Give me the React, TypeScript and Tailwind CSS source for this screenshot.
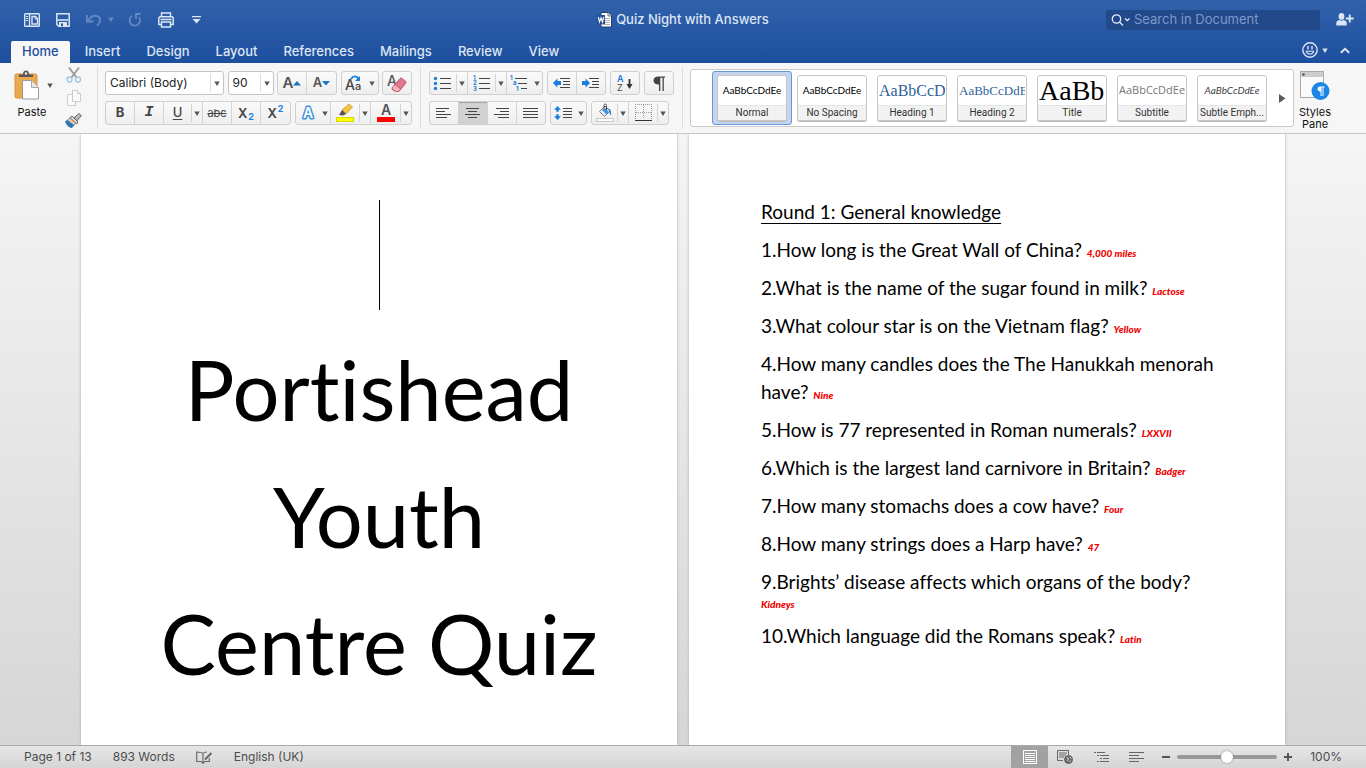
import { useState } from 'react'
import type { ReactNode } from 'react'

const TABS = ['Home', 'Insert', 'Design', 'Layout', 'References', 'Mailings', 'Review', 'View']

const STYLES = [
    { name: 'Normal', sample: 'AaBbCcDdEe', className: "justify-center font-['Lato'] text-[10px] text-black" },
    { name: 'No Spacing', sample: 'AaBbCcDdEe', className: "justify-center font-['Lato'] text-[10px] text-black" },
    { name: 'Heading 1', sample: 'AaBbCcD', className: "font-['Liberation_Serif'] text-base text-[#2f5f9e]" },
    { name: 'Heading 2', sample: 'AaBbCcDdE', className: "font-['Liberation_Serif'] text-[13px] text-[#2f5f9e]" },
    { name: 'Title', sample: 'AaBb(', className: "font-['Liberation_Serif'] text-[28px] text-black" },
    { name: 'Subtitle', sample: 'AaBbCcDdEe', className: "font-['Open_Sans'] text-[11px] text-[#777]" },
    { name: 'Subtle Emph...', sample: 'AaBbCcDdEe', className: "justify-center font-['Lato'] text-[10px] italic text-[#444]" },
]

const QUESTIONS = [
    { q: '1.How long is the Great Wall of China?', a: '4,000 miles' },
    { q: '2.What is the name of the sugar found in milk?', a: 'Lactose' },
    { q: '3.What colour star is on the Vietnam flag?', a: 'Yellow' },
    { q: '4.How many candles does the The Hanukkah menorah have?', a: 'Nine' },
    { q: '5.How is 77 represented in Roman numerals?', a: 'LXXVII' },
    { q: '6.Which is the largest land carnivore in Britain?', a: 'Badger' },
    { q: '7.How many stomachs does a cow have?', a: 'Four' },
    { q: '8.How many strings does a Harp have?', a: '47' },
    { q: '9.Brights’ disease affects which organs of the body?', a: 'Kidneys', below: true },
    { q: '10.Which language did the Romans speak?', a: 'Latin' },
]

function Caret({ className = 'text-[#555]' }: { className?: string }) {
    return (
        <svg width="6" height="5" viewBox="0 0 6 5" className={`shrink-0 ${className}`} fill="currentColor">
            <path d="M0.3 0.5h5.4L3 5z" />
        </svg>
    )
}

function Group({ children }: { children: ReactNode }) {
    return (
        <div className="flex h-6 divide-x divide-[#d4d4d4] rounded-[3px] border border-[#cfcfcf] bg-linear-to-b from-[#fafafa] to-[#eeeeee]">
            {children}
        </div>
    )
}

function Tool({ label, width = 'w-[29px]', menu, split, active, children }: {
    label: string
    width?: string
    menu?: boolean
    split?: boolean
    active?: boolean
    children: ReactNode
}) {
    return (
        <button
            type="button"
            aria-label={label}
            title={label}
            className={`flex items-center ${width} ${active ? 'bg-[#d2d2d2] shadow-[inset_0_1px_1px_#a5a5a5]' : ''}`}
        >
            <span className="flex flex-1 items-center justify-center">{children}</span>
            {menu && (
                <span className={`flex h-[18px] w-[11px] items-center justify-center ${split ? 'border-l border-[#d4d4d4]' : ''}`}>
                    <Caret />
                </span>
            )}
        </button>
    )
}

function Lines({ rows, color = '#454545' }: { rows: number[][]; color?: string }) {
    return (
        <svg width="18" height="12" viewBox="0 0 18 12" shapeRendering="crispEdges" fill={color}>
            {rows.map(([x, w], i) => (
                <rect key={i} x={x} y={1 + i * 3} width={w} height="1" />
            ))}
        </svg>
    )
}

function Indent({ right }: { right?: boolean }) {
    return (
        <svg width="18" height="14" viewBox="0 0 18 14">
            <path d={right ? 'M8 7L3.6 2.5V5H0v4h3.6v2.5z' : 'M0 7l4.4-4.5V5H8v4H4.4v2.5z'} fill="#1a7fdc" />
            <g fill="#454545" shapeRendering="crispEdges">
                <rect x="7" y="2" width="10" height="1" />
                <rect x="10" y="5" width="7" height="1" />
                <rect x="10" y="8" width="7" height="1" />
                <rect x="7" y="11" width="10" height="1" />
            </g>
        </svg>
    )
}

function ListIcon({ marks }: { marks: 'dots' | 'numbers' | 'levels' }) {
    const indents = marks === 'levels' ? [5, 8, 11] : [6, 6, 6]
    return (
        <svg width="18" height="16" viewBox="0 0 18 16" className="overflow-visible">
            {indents.map((x, i) => (
                <rect key={i} x={x} y={3 + i * 5} width={marks === 'levels' ? 17 - x : 11} height="1" fill="#454545" shapeRendering="crispEdges" />
            ))}
            {marks === 'dots' && [3.5, 8.5, 13.5].map((y) => <circle key={y} cx="1.5" cy={y} r="1.7" fill="#1a7fdc" />)}
            {marks !== 'dots' && (
                <g fill="#1a7fdc" fontFamily="Inter, sans-serif" fontSize="6" fontWeight="700">
                    <text x="0" y="5">1</text>
                    <text x={marks === 'levels' ? 3 : 0} y="10">{marks === 'levels' ? 'a' : '2'}</text>
                    <text x={marks === 'levels' ? 6 : 0} y="16">{marks === 'levels' ? '1' : '3'}</text>
                </g>
            )}
        </svg>
    )
}

function TitleBar() {
    return (
        <div className="grid h-[39px] grid-cols-[1fr_auto_1fr] items-center text-[#dbe5f4]">
            <div className="flex items-center pl-6">
                <button type="button" aria-label="Show sidebar">
                    <svg width="16" height="16" viewBox="0 0 16 16" fill="none" stroke="currentColor" strokeWidth="1.4">
                        <rect x="0.7" y="1.7" width="14.6" height="12.6" rx="0.8" />
                        <path d="M5.5 2v12" />
                        <path d="M8 4.500h3.500l2 2v5.500H8z" />
                        <path d="M2 4.500h2M2 6.500h2M2 8.500h2" strokeWidth="1" />
                        <path d="M11 4.500V7h2.500" strokeWidth="1" />
                    </svg>
                </button>
                <button type="button" aria-label="Save" className="ml-4">
                    <svg width="14" height="14" viewBox="0 0 14 14" fill="none" stroke="currentColor" strokeWidth="1.5">
                        <path d="M0.8 0.8h12.4v12.4H2.6L0.8 11.4z" />
                        <path d="M1.500 7h11" strokeWidth="1.6" />
                        <path d="M3 9h8v5H3z" fill="currentColor" stroke="none" />
                        <path d="M5 10.500h2v2.700H5z" fill="#275aa5" stroke="none" />
                    </svg>
                </button>
                <button type="button" aria-label="Undo" className="ml-4 flex items-center gap-[6px] text-[#6489c2]">
                    <svg width="16" height="14" viewBox="0 0 16 14" fill="none" stroke="currentColor" strokeWidth="1.8">
                        <path d="M1 2v6.5h6.300" />
                        <path d="M1.500 8C4 4.500 8 1.800 11.500 3.300C15.500 5 15 9 11 12.800" />
                    </svg>
                    <Caret className="text-[#6489c2]" />
                </button>
                <button type="button" aria-label="Repeat" className="ml-[14px] text-[#6489c2]">
                    <svg width="14" height="14" viewBox="0 0 14 14" fill="none" stroke="currentColor" strokeWidth="1.8">
                        <path d="M4 2.800A5.300 5.300 0 1 0 11.200 4.200" />
                        <path d="M8 6V1h4.500" />
                    </svg>
                </button>
                <button type="button" aria-label="Print" className="ml-4">
                    <svg width="16" height="16" viewBox="0 0 16 16" fill="none" stroke="currentColor" strokeWidth="1.5">
                        <path d="M3.500 4V1h9v3M3.500 12.500H0.800V5.800L2 4.700h12l1.200 1.100v6.700h-2.700" />
                        <path d="M3.500 10h9v5h-9zM2.500 7.500h11" />
                    </svg>
                </button>
                <button type="button" aria-label="Customise toolbar" className="ml-[18px]">
                    <svg width="9" height="8" viewBox="0 0 9 8" fill="currentColor">
                        <path d="M0 0h9v1.300H0zM0.500 3h8L4.500 7.500z" />
                    </svg>
                </button>
            </div>
            <h1 className="flex items-center gap-1 text-[13px] font-medium">
                <svg width="15" height="16" viewBox="0 0 15 16">
                    <path d="M4 0.500h7l3.500 3.500v11H4z" fill="#fff" stroke="#23406f" />
                    <path d="M11 0.500V4h3.500" fill="#ddd" stroke="#555" strokeWidth="0.800" />
                    <path d="M8 6.500h5M8 8.500h5M5 10.500h8M5 12.500h8" stroke="#999" strokeWidth="0.800" />
                    <rect x="0" y="3" width="8" height="9" fill="#244f91" />
                    <path d="M1.300 5l1.200 5L4 6l1.500 4 1.200-5" fill="none" stroke="#fff" strokeWidth="1.200" />
                </svg>
                Quiz Night with Answers
            </h1>
            <div className="flex items-center justify-end gap-4 pr-3">
                <label className="flex h-5 w-[214px] items-center gap-1 rounded-[3px] bg-[#22498a] px-[5px]">
                    <svg width="19" height="12" viewBox="0 0 19 12" fill="none" stroke="#e6edf8" strokeWidth="1.300">
                        <circle cx="5.500" cy="5" r="4.200" />
                        <path d="M8.500 8l3.500 3.500M14 4.500l2.200 2.200 2.200-2.200" />
                    </svg>
                    <input
                        type="search"
                        aria-label="Search in Document"
                        placeholder="Search in Document"
                        className="min-w-0 flex-1 bg-transparent text-[13px] outline-none placeholder:text-[#7d9ac8]"
                    />
                </label>
                <button type="button" aria-label="Share">
                    <svg width="18" height="13" viewBox="0 0 18 13" fill="currentColor">
                        <ellipse cx="5.500" cy="3.400" rx="2.900" ry="3.400" />
                        <path d="M0.300 12.500V9.800C0.300 8 2.500 7.300 3.500 7c1 .9 3 .9 4 0 1 .3 3.200 1 3.200 2.800v2.700zM12.800 1.500h1.900v3h3v1.900h-3v3h-1.900v-3H9.800V4.500h3z" />
                    </svg>
                </button>
            </div>
        </div>
    )
}

function Tabs() {
    const [tab, setTab] = useState('Home')

    return (
        <div className="flex h-6 items-end justify-between pl-[11px] pr-4 text-[#dbe5f4]">
            <nav className="flex gap-1">
                {TABS.map((name) => (
                    <button
                        key={name}
                        type="button"
                        onClick={() => setTab(name)}
                        className={`h-[22px] rounded-t-[2px] px-[11px] pb-[2px] text-[13px] font-medium leading-5 ${tab === name ? 'bg-[#f7f7f7] text-[#1e4e9d]' : ''}`}
                    >
                        {name}
                    </button>
                ))}
            </nav>
            <div className="flex h-[22px] items-center gap-3 pb-1">
                <button type="button" aria-label="Feedback" className="flex items-center gap-1">
                    <svg width="16" height="16" viewBox="0 0 16 16" fill="none" stroke="currentColor" strokeWidth="1.400">
                        <circle cx="8" cy="8" r="7.200" />
                        <path d="M6 4v3.500M10 4v3.500" />
                        <path d="M4.300 9.300c.8 3.600 6.600 3.600 7.400 0z" strokeWidth="1.100" />
                    </svg>
                    <Caret className="text-[#dbe5f4]" />
                </button>
                <button type="button" aria-label="Collapse ribbon">
                    <svg width="10" height="7" viewBox="0 0 10 7" fill="none" stroke="currentColor" strokeWidth="2">
                        <path d="M0.800 5.800L5 1.800l4.200 4" />
                    </svg>
                </button>
            </div>
        </div>
    )
}

function Clipboard() {
    return (
        <div className="flex shrink-0 pl-[14px]">
            <button type="button" className="flex w-9 flex-col items-center pt-[7px] text-[11px] leading-4 text-[#111]">
                <span className="flex items-center gap-[6px] self-start">
                    <svg width="27" height="30" viewBox="0 0 27 30" className="shrink-0">
                        <rect x="1" y="4" width="22" height="24" rx="1.500" fill="#e9a94f" stroke="#d3933b" />
                        <path d="M5 7V4.500h4C9 2 10 0.500 12 0.500s3 1.500 3 4h4V7z" fill="#585858" />
                        <circle cx="12" cy="3.500" r="1.200" fill="#eee" />
                        <path d="M8.500 10.500h9l7 7V29h-16z" fill="#fff" stroke="#9a9a9a" />
                        <path d="M17.500 10.500v7h7" fill="#e8e8e8" stroke="#aaa" />
                    </svg>
                    <Caret />
                </span>
                <span className="mt-1">Paste</span>
            </button>
            <div className="ml-[15px] flex flex-col items-center gap-[7px] pt-1">
                <button type="button" aria-label="Cut">
                    <svg width="16" height="16" viewBox="0 0 16 16" fill="none">
                        <path d="M3 0.500l7.500 10M13 0.500L5.500 10.500" stroke="#999" strokeWidth="1.800" />
                        <circle cx="3.500" cy="12.500" r="2.500" stroke="#9cc6e8" strokeWidth="1.300" />
                        <circle cx="12" cy="12.500" r="2.500" stroke="#9cc6e8" strokeWidth="1.300" />
                    </svg>
                </button>
                <button type="button" aria-label="Copy">
                    <svg width="16" height="16" viewBox="0 0 16 16" fill="#fafafa" stroke="#ccc">
                        <path d="M1.500 4.500h5l3 3v8h-8z" />
                        <path d="M6.500 0.500h5l3 3v8h-8z" />
                        <path d="M11.500 0.500v3h3" />
                    </svg>
                </button>
                <button type="button" aria-label="Format painter">
                    <svg width="17" height="15" viewBox="0 0 17 15">
                        <path d="M0.500 8.500L5 5l5.500 5.500L7 14.500C4 14.500 1.500 12 0.500 8.500z" fill="#2a79bf" stroke="#1f5c93" strokeWidth="0.600" />
                        <path d="M2.500 7L6 4.500l5 5L9 12z" fill="#eec89b" />
                        <path d="M5 4.500l2-1.500 6 6-1.500 2z" fill="#ddd" stroke="#555" strokeWidth="0.900" />
                        <path d="M9 5l5-4.500 2.300 2.200L12 7.800z" fill="#bbb" stroke="#555" strokeWidth="0.900" />
                    </svg>
                </button>
            </div>
        </div>
    )
}

function SelectBox({ label, value, className }: { label: string; value: string; className: string }) {
    return (
        <div className={`relative ${className}`}>
            <select
                aria-label={label}
                className="block h-6 w-full appearance-none rounded-[3px] border border-[#c4c4c4] bg-white pl-1 text-[12px] text-[#222] outline-none"
            >
                <option>{value}</option>
            </select>
            <span className="pointer-events-none absolute inset-y-[3px] right-px flex w-[13px] items-center justify-center border-l border-[#ddd]">
                <Caret />
            </span>
        </div>
    )
}

function FontTools() {
    return (
        <div className="flex shrink-0 flex-col gap-[6px]">
            <div className="flex justify-between">
                <SelectBox label="Font" value="Calibri (Body)" className="w-[119px]" />
                <SelectBox label="Font size" value="90" className="w-[46px]" />
                <Group>
                    <Tool label="Increase font size">
                        <span className="text-[15px] font-semibold text-[#555]">A</span>
                        <svg width="8" height="5" viewBox="0 0 8 5" fill="#1a73c4"><path d="M0 4.500L4 0l4 4.500z" /></svg>
                    </Tool>
                    <Tool label="Decrease font size">
                        <span className="text-[13px] font-semibold text-[#555]">A</span>
                        <svg width="8" height="5" viewBox="0 0 8 5" fill="#1a73c4"><path d="M0 0l4 4.500L8 0z" /></svg>
                    </Tool>
                </Group>
                <Group>
                    <Tool label="Change case" width="w-[36px]" menu>
                        <svg width="18" height="16" viewBox="0 0 18 16" className="overflow-visible">
                            <g fontFamily="Inter, sans-serif" fontWeight="500" fill="#444">
                                <text x="0" y="15" fontSize="14">A</text>
                                <text x="10" y="15" fontSize="11">a</text>
                            </g>
                            <path d="M6 4c2-3.500 6-3.500 7.500 0" fill="none" stroke="#1a7fdc" strokeWidth="1.800" />
                            <path d="M15 1v5h-5z" fill="#1a7fdc" />
                        </svg>
                    </Tool>
                </Group>
                <Group>
                    <Tool label="Clear formatting" width="w-[28px]">
                        <svg width="20" height="19" viewBox="0 0 20 19" className="overflow-visible">
                            <text x="0" y="12" fontSize="14" fontFamily="Inter, sans-serif" fontWeight="500" fill="#555">A</text>
                            <path d="M5 14l8-9.500c.6-.7 1.300-.6 2-.1l3.500 2.800c.7.600.8 1.200.2 2L12 17.500H8.500L5.200 15.500z" fill="#e0778c" stroke="#b04f66" strokeWidth="0.900" />
                            <path d="M5 14l3-3.500 5.500 4.500-2 2.500H8.500z" fill="#f2b3bf" stroke="#b95c70" strokeWidth="0.700" />
                        </svg>
                    </Tool>
                </Group>
            </div>
            <div className="flex gap-1 text-[#444]">
                <Group>
                    <Tool label="Bold"><b className="text-[13px]">B</b></Tool>
                    <Tool label="Italic"><i className="font-['Liberation_Mono'] text-[15px] font-bold">I</i></Tool>
                    <Tool label="Underline" width="w-[39px]" menu split><span className="text-[13px] font-medium underline underline-offset-2">U</span></Tool>
                    <Tool label="Strikethrough"><s className="text-[11px]">abc</s></Tool>
                    <Tool label="Subscript">
                        <span className="text-[13px] font-semibold leading-4">X</span>
                        <span className="self-end pl-px text-[9px] font-bold leading-[8px] text-[#1a7fdc]">2</span>
                    </Tool>
                    <Tool label="Superscript">
                        <span className="text-[13px] font-semibold leading-4">X</span>
                        <span className="self-start pl-px text-[9px] font-bold leading-[8px] text-[#1a7fdc]">2</span>
                    </Tool>
                </Group>
                <Group>
                    <Tool label="Text effects" width="w-[35px]" menu>
                        <svg width="18" height="18" viewBox="0 0 18 18" className="overflow-visible">
                            <text x="4" y="14" fontSize="14" fontFamily="Inter, sans-serif" fontWeight="600" fill="#fff" stroke="#3d8fdd" strokeWidth="3" strokeLinejoin="round" paintOrder="stroke">A</text>
                        </svg>
                    </Tool>
                    <Tool label="Highlight" width="w-[40px]" menu split>
                        <svg width="18" height="20" viewBox="0 0 18 20">
                            <rect x="0.500" y="14.500" width="17" height="4" fill="#ff0" stroke="#d8d800" />
                            <path d="M6 7l7-6 3.500 3-6.500 7z" fill="#f3c540" stroke="#b98d20" strokeWidth="0.700" />
                            <path d="M3 12l3-5 4 4-3 1.500z" fill="#555" />
                        </svg>
                    </Tool>
                    <Tool label="Font colour" width="w-[40px]" menu split>
                        <svg width="18" height="20" viewBox="0 0 18 20" className="overflow-visible">
                            <text x="4" y="12" fontSize="14" fontFamily="Inter, sans-serif" fontWeight="600" fill="#555">A</text>
                            <rect x="0" y="14" width="18" height="5" fill="#f00" />
                        </svg>
                    </Tool>
                </Group>
            </div>
        </div>
    )
}

function ParagraphTools() {
    return (
        <div className="flex shrink-0 flex-col gap-[6px]">
            <div className="flex gap-1">
                <Group>
                    <Tool label="Bullets" width="w-[38px]" menu split><ListIcon marks="dots" /></Tool>
                    <Tool label="Numbering" width="w-[39px]" menu split><ListIcon marks="numbers" /></Tool>
                    <Tool label="Multilevel list" width="w-[35px]" menu><ListIcon marks="levels" /></Tool>
                </Group>
                <Group>
                    <Tool label="Decrease indent"><Indent /></Tool>
                    <Tool label="Increase indent" width="w-[28px]"><Indent right /></Tool>
                </Group>
                <Group>
                    <Tool label="Sort" width="w-[28px]">
                        <svg width="18" height="18" viewBox="0 0 18 18" className="overflow-visible">
                            <g fontFamily="Inter, sans-serif" fontSize="9">
                                <text x="1" y="8" fill="#1a7fdc" fontWeight="600">A</text>
                                <text x="1" y="17" fill="#444">Z</text>
                            </g>
                            <path d="M13.500 5v8" stroke="#333" strokeWidth="1.800" />
                            <path d="M10.500 10h6l-3 5z" fill="#333" />
                        </svg>
                    </Tool>
                </Group>
                <Group>
                    <Tool label="Show formatting marks" width="w-[28px]">
                        <svg width="12" height="15" viewBox="0 0 12 15" fill="#444">
                            <path d="M5.500 0.500H12v1.300h-1.200V15H9.500V1.800H7.300V15H6V8.500C2.500 8.700 0.500 7 0.500 4.500S2.500 0.500 5.500 0.500z" />
                        </svg>
                    </Tool>
                </Group>
            </div>
            <div className="flex gap-1">
                <Group>
                    <Tool label="Align left"><Lines rows={[[1, 13], [1, 9], [1, 15], [1, 11]]} /></Tool>
                    <Tool label="Centre" active><Lines rows={[[2, 13], [4, 9], [1, 15], [4, 9]]} /></Tool>
                    <Tool label="Align right"><Lines rows={[[3, 13], [7, 9], [1, 15], [5, 11]]} /></Tool>
                    <Tool label="Justify" width="w-[28px]"><Lines rows={[[1, 15], [1, 15], [1, 15], [1, 15]]} /></Tool>
                </Group>
                <Group>
                    <Tool label="Line spacing" width="w-[35px]" menu>
                        <svg width="18" height="14" viewBox="0 0 18 14">
                            <path d="M3.500 0L7 3.800H4.700v2H2.300v-2H0zM3.500 14L7 10.200H4.700v-2H2.300v2H0z" fill="#1a7fdc" />
                            <g fill="#454545" shapeRendering="crispEdges">
                                <rect x="9" y="2" width="9" height="1" />
                                <rect x="9" y="5" width="9" height="1" />
                                <rect x="9" y="8" width="9" height="1" />
                                <rect x="9" y="11" width="9" height="1" />
                            </g>
                        </svg>
                    </Tool>
                </Group>
                <Group>
                    <Tool label="Shading" width="w-[37px]" menu split>
                        <svg width="18" height="20" viewBox="0 0 18 20">
                            <rect x="0.500" y="15.500" width="17" height="3" fill="#fafafa" stroke="#c8c8c8" />
                            <path d="M3.500 8.500L9 3l5 5-5.500 5.500z" fill="#eee" stroke="#777" />
                            <path d="M6 7l2.500-2.500 4.500 4.500L10.500 11.500z" fill="#3d94e0" />
                            <path d="M8 5V2.500C8 .500 10.500.500 10.500 2.500V7" fill="none" stroke="#444" />
                            <path d="M12 5.500c3 .5 3.500 3.500 3 7-1.300-1-1.600-3-1.500-5z" fill="#1a7fdc" />
                        </svg>
                    </Tool>
                    <Tool label="Borders" width="w-[39px]" menu split>
                        <svg width="17" height="18" viewBox="0 0 17 18" fill="none" stroke="#999" shapeRendering="crispEdges">
                            <path d="M0.500 15V0.500h16V15M8.500 0.500V15M0.500 8.500h16" strokeDasharray="1 1" />
                            <path d="M0 16.500h17" stroke="#333" />
                        </svg>
                    </Tool>
                </Group>
            </div>
        </div>
    )
}

function StyleGallery() {
    const [current, setCurrent] = useState('Normal')

    return (
        <div className="flex h-[58px] min-w-0 items-center overflow-hidden rounded-[3px] border border-[#c9c9c9] bg-white pl-[21px]">
            {STYLES.map((style) => (
                <button
                    key={style.name}
                    type="button"
                    onClick={() => setCurrent(style.name)}
                    className={`h-[54px] w-20 shrink-0 rounded-[3px] border px-1 ${current === style.name ? 'border-[#6a96d4] bg-[#c3d5ee]' : 'border-transparent'}`}
                >
                    <span className="flex h-[46px] flex-col overflow-hidden rounded-[3px] border border-[#c6c6c6] bg-white shadow-[0_1px_0_#bbb]">
                        <span className={`mx-px flex h-[30px] items-center overflow-hidden whitespace-nowrap ${style.className}`}>
                            {style.sample}
                        </span>
                        <span className="flex-1 whitespace-nowrap border-t border-[#e6e6e6] bg-[#f2f2f2] text-center font-['Roboto'] text-[10px] leading-[14px] text-[#333]">
                            {style.name}
                        </span>
                    </span>
                </button>
            ))}
            <button type="button" aria-label="More styles" className="flex h-full w-[21px] shrink-0 items-center justify-center">
                <svg width="7" height="9" viewBox="0 0 7 9" fill="#5a5a5a"><path d="M0 0l6.500 4.500L0 9z" /></svg>
            </button>
        </div>
    )
}

function Ribbon() {
    return (
        <div className="flex h-[71px] border-b border-[#c6c6c6] bg-[#f6f6f6]">
            <Clipboard />
            <div className="my-1 ml-[15px] mr-[7px] w-px bg-[#ddd]" />
            <div className="pt-2"><FontTools /></div>
            <div className="my-1 mx-2 w-px bg-[#ddd]" />
            <div className="pt-2"><ParagraphTools /></div>
            <div className="my-1 ml-2 mr-[7px] w-px bg-[#ddd]" />
            <div className="min-w-0 pt-[6px]"><StyleGallery /></div>
            <button type="button" className="flex w-[42px] shrink-0 flex-col items-center pt-2 text-[11px] leading-3 text-[#111]">
                <svg width="30" height="30" viewBox="0 0 30 30" className="mb-[5px] shrink-0">
                    <rect x="0.500" y="0.500" width="23" height="26" fill="#fafafa" stroke="#aaa" />
                    <rect x="1" y="1" width="22" height="5" fill="#ccc" />
                    <circle cx="3.500" cy="3.500" r="1.200" fill="#555" />
                    <circle cx="20.500" cy="20" r="9" fill="#1a86e8" />
                    <path d="M20 15.500h4.500v1h-1v8.500h-1v-8.500h-1V25h-1v-4.500c-2 0-3-1.200-3-2.500s1-2.500 2.500-2.500z" fill="#fff" />
                </svg>
                Styles Pane
            </button>
        </div>
    )
}

function Pages() {
    return (
        <main className="flex min-h-0 flex-1 justify-center gap-3 overflow-hidden bg-linear-to-b from-[#f5f5f5] to-[#d6d6d6] font-['Lato',sans-serif] text-black [font-variant-ligatures:none]">
            <article className="w-[596px] shrink-0 bg-white px-[72px] pt-[57px] text-center text-[83px] leading-[127px] shadow-[0_0_3px_#b0b0b0]">
                <div className="mb-2 flex h-[127px] items-center justify-center">
                    <span className="h-[110px] w-px bg-black" />
                </div>
                <p>Portishead</p>
                <p>Youth</p>
                <p>Centre Quiz</p>
            </article>
            <article className="w-[596px] shrink-0 bg-white pl-[72px] pr-16 pt-16 text-[19px] leading-7 shadow-[0_0_3px_#b0b0b0]">
                <h2 className="mb-[10px] underline decoration-1 underline-offset-4">Round 1: General knowledge</h2>
                {QUESTIONS.map(({ q, a, below }) => (
                    <p key={a} className="mb-[10px]">
                        {q}{' '}
                        <em className={`text-[10px] font-black text-[#f00000] ${below ? 'block leading-4' : 'leading-none'}`}>{a}</em>
                    </p>
                ))}
            </article>
        </main>
    )
}

function StatusBar() {
    const [zoom, setZoom] = useState(50)

    return (
        <footer className="flex h-[23px] shrink-0 items-center justify-between border-t border-[#a9a9a9] bg-linear-to-b from-[#e6e6e6] to-[#d5d5d5] text-[12px] text-[#4c4c4c]">
            <div className="flex items-center gap-[21px] pl-6">
                <span>Page 1 of 13</span>
                <span>893 Words</span>
                <button type="button" aria-label="Proofing">
                    <svg width="17" height="13" viewBox="0 0 17 13" fill="none" stroke="#666" strokeWidth="1.100">
                        <path d="M7 2.500C5.500 1 3 1 0.700 1v9.500h4.500l1.800 2 1.800-2h4.500V7M7 2.500V12M7 2.500C8 1.300 9.500 1 11 1" />
                        <path d="M9 8.500L15.500 2" strokeWidth="2" />
                    </svg>
                </button>
                <span>English (UK)</span>
            </div>
            <div className="flex h-full items-center pr-6">
                <button type="button" aria-label="Print layout" className="flex h-full w-[37px] items-center justify-center bg-[#a2a2a2]">
                    <svg width="14" height="14" viewBox="0 0 14 14" fill="none" stroke="#fff" shapeRendering="crispEdges">
                        <path d="M0.500 0.500h13v13H0.500zM2 3.500h10M2 5.500h10M2 7.500h10M2 9.500h10M2 11.500h10" />
                    </svg>
                </button>
                <button type="button" aria-label="Web layout" className="ml-[9px]">
                    <svg width="16" height="14" viewBox="0 0 16 14" fill="none" stroke="#666">
                        <path d="M6 10.500H0.500v-10h11V5M2 3h8M2 5h7M2 7h5" />
                        <circle cx="11.500" cy="9.500" r="4" fill="#666" />
                        <path d="M9.500 7.500l2 1-1 2.500M12.500 7l2 1.500M12.500 12l1-1.500" stroke="#ddd" />
                    </svg>
                </button>
                <button type="button" aria-label="Outline" className="ml-[21px]">
                    <svg width="15" height="11" viewBox="0 0 15 11" fill="none" stroke="#666" shapeRendering="crispEdges">
                        <path d="M0 0.500h2M3 0.500h8M3 3.500h2M6 3.500h9M6 6.500h2M9 6.500h6M3 9.500h2M6 9.500h9" />
                    </svg>
                </button>
                <button type="button" aria-label="Draft" className="ml-5">
                    <svg width="15" height="11" viewBox="0 0 15 11" fill="none" stroke="#666" shapeRendering="crispEdges">
                        <path d="M0 0.500h15M0 3.500h10M0 6.500h15M0 9.500h10" />
                    </svg>
                </button>
                <button type="button" aria-label="Zoom out" className="ml-[18px]">
                    <svg width="8" height="8" viewBox="0 0 8 8" stroke="#555" strokeWidth="2"><path d="M0 4h8" /></svg>
                </button>
                <input
                    type="range"
                    aria-label="Zoom"
                    value={zoom}
                    onChange={(e) => setZoom(Number(e.target.value))}
                    className="mx-[7px] h-1 w-[100px] appearance-none rounded-full bg-[#989898] [&::-webkit-slider-thumb]:size-3 [&::-webkit-slider-thumb]:appearance-none [&::-webkit-slider-thumb]:rounded-full [&::-webkit-slider-thumb]:bg-white [&::-webkit-slider-thumb]:shadow-[0_0_2px_#777]"
                />
                <button type="button" aria-label="Zoom in">
                    <svg width="8" height="8" viewBox="0 0 8 8" stroke="#555" strokeWidth="2"><path d="M0 4h8M4 0v8" /></svg>
                </button>
                <span className="ml-[18px]">100%</span>
            </div>
        </footer>
    )
}

export default function App() {
    return (
        <div className="flex h-screen flex-col overflow-hidden font-['Inter',sans-serif]">
            <header className="shrink-0">
                <div className="bg-linear-to-b from-[#3161aa] to-[#1d4f9f]">
                    <TitleBar />
                    <Tabs />
                </div>
                <Ribbon />
            </header>
            <Pages />
            <StatusBar />
        </div>
    )
}
